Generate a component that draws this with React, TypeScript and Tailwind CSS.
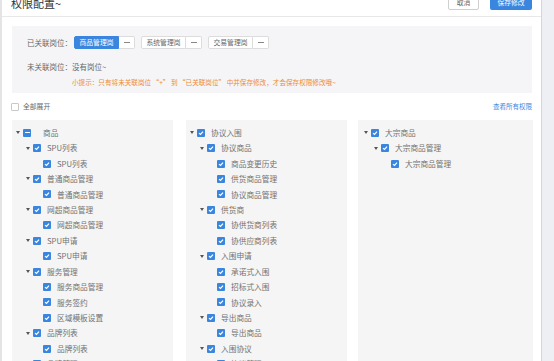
import React from "react";

type Node = { label: string; level: number; partial?: boolean };

const col1: Node[] = [
  { label: "商品", level: 0, partial: true },
  { label: "SPU列表", level: 1 },
  { label: "SPU列表", level: 2 },
  { label: "普通商品管理", level: 1 },
  { label: "普通商品管理", level: 2 },
  { label: "网超商品管理", level: 1 },
  { label: "网超商品管理", level: 2 },
  { label: "SPU申请", level: 1 },
  { label: "SPU申请", level: 2 },
  { label: "服务管理", level: 1 },
  { label: "服务商品管理", level: 2 },
  { label: "服务签约", level: 2 },
  { label: "区域模板设置", level: 2 },
  { label: "品牌列表", level: 1 },
  { label: "品牌列表", level: 2 },
  { label: "品牌管理", level: 1 },
];

const col2: Node[] = [
  { label: "协议入围", level: 0 },
  { label: "协议商品", level: 1 },
  { label: "商品变更历史", level: 2 },
  { label: "供货商品管理", level: 2 },
  { label: "协议商品管理", level: 2 },
  { label: "供货商", level: 1 },
  { label: "协供货商列表", level: 2 },
  { label: "协供应商列表", level: 2 },
  { label: "入围申请", level: 1 },
  { label: "承诺式入围", level: 2 },
  { label: "招标式入围", level: 2 },
  { label: "协议录入", level: 2 },
  { label: "导出商品", level: 1 },
  { label: "导出商品", level: 2 },
  { label: "入围协议", level: 1 },
  { label: "协议管理", level: 2 },
];

const col3: Node[] = [
  { label: "大宗商品", level: 0 },
  { label: "大宗商品管理", level: 1 },
  { label: "大宗商品管理", level: 2 },
];

const Check = ({ partial }: { partial?: boolean }) => (
  <span className="w-[8px] h-[8px] rounded-[1px] bg-[#3a86df] flex items-center justify-center shrink-0">
    {partial ? (
      <span className="w-[5px] h-[1.5px] bg-white" />
    ) : (
      <svg width="6" height="6" viewBox="0 0 6 6">
        <path d="M1 3.1 L2.5 4.5 L5 1.6" stroke="#fff" strokeWidth="1.2" fill="none" />
      </svg>
    )}
  </span>
);

const TreeRow = ({ node }: { node: Node }) => {
  const pad = ["pl-[3px]", "pl-[13px]", "pl-[23px]"][node.level];
  return (
    <div className={`h-[15.43px] flex items-center ${pad}`}>
      <span className="w-[6px] h-full flex items-center justify-center shrink-0">
        {node.level < 2 && (
          <span className="w-0 h-0 border-l-[2px] border-r-[2px] border-t-[3px] border-l-transparent border-r-transparent border-t-[#555]" />
        )}
      </span>
      <span className="ml-[2px]">
        <Check partial={node.partial} />
      </span>
      <span className={`${node.partial ? "ml-[12px]" : "ml-[6px]"} text-[7.7px] leading-none text-[#727272] whitespace-nowrap`}>
        {node.label}
      </span>
    </div>
  );
};

const TreeCol = ({ nodes, w }: { nodes: Node[]; w: string }) => (
  <div className={`${w} bg-[#f5f5f5] pt-[5px] h-[260px] shrink-0`}>
    {nodes.map((n, i) => (
      <TreeRow key={i} node={n} />
    ))}
  </div>
);

const PostTag = ({ name, active }: { name: string; active?: boolean }) => (
  <div className="flex h-[13px]">
    <span
      className={`w-[45px] flex items-center justify-center text-[6.8px] rounded-l-[2px] border ${
        active ? "bg-[#3a86df] border-[#3a86df] text-white" : "bg-white border-[#dcdcdc] text-[#666]"
      }`}
    >
      {name}
    </span>
    <span className="w-[16px] flex items-center justify-center bg-white border border-l-0 border-[#dcdcdc] rounded-r-[2px]">
      <span className="w-[6px] h-[1px] bg-[#888]" />
    </span>
  </div>
);

export default function App() {
  return (
    <div
      className="w-[554px] h-[361px] overflow-hidden flex bg-[#eeeef5]"
      style={{ fontFamily: '"Noto Sans CJK SC", "Noto Sans", sans-serif' }}
    >
      <div className="w-[2px] bg-[#e4e4e4] shrink-0" />
      <div className="w-[540px] bg-white border-r border-[#d6d6d6] shrink-0 pl-[10px] pr-[9px]">
        <div className="-mt-[9px] h-[26px] border-b border-[#e8e8e8] -ml-[10px] -mr-[9px] pl-[9px] pr-[9px] flex items-start justify-between">
          <span className="pt-[4px] text-[11px] leading-[16px] text-[#333]">权限配置~</span>
          <div className="flex gap-[11px] mt-[3px]">
            <span className="w-[31px] h-[16px] border border-[#cfcfcf] rounded-[2px] bg-white text-[6.8px] text-[#666] flex items-center justify-center">
              取消
            </span>
            <span className="w-[42px] h-[16px] rounded-[2px] bg-[#3a86df] text-[6.8px] text-white flex items-center justify-center">
              保存修改
            </span>
          </div>
        </div>

        <div className="mt-[9px] bg-[#f5f5f7] h-[67px] pl-[15px] pt-[10px]">
          <div className="flex items-center h-[13px]">
            <span className="text-[7.5px] text-[#666] w-[47px]">已关联岗位：</span>
            <div className="flex gap-[6px]">
              <PostTag name="商品管理岗" active />
              <PostTag name="系统管理岗" />
              <PostTag name="交易管理岗" />
            </div>
          </div>
          <div className="mt-[13px] text-[7.5px] leading-[10px] text-[#666]">未关联岗位：没有岗位~</div>
          <div className="mt-[5px] ml-[45px] text-[6.6px] leading-[10px] text-[#f08a34] whitespace-nowrap">
            小提示：只有将未关联岗位 “+” 到 “已关联岗位” 中并保存修改，才会保存权限修改哦~
          </div>
        </div>

        <div className="h-[27px] flex items-center justify-between">
          <label className="flex items-center gap-[4px] -ml-[1px]">
            <span className="w-[8px] h-[8px] border border-[#c8c8c8] bg-white rounded-[1px]" />
            <span className="text-[6.8px] text-[#666]">全部展开</span>
          </label>
          <span className="text-[6.5px] text-[#3a86df]">查看所有权限</span>
        </div>

        <div className="flex">
          <TreeCol nodes={col1} w="w-[161px]" />
          <div className="w-[13px] shrink-0" />
          <TreeCol nodes={col2} w="w-[161px]" />
          <div className="w-[11px] shrink-0" />
          <div className="w-[175px] bg-[#f5f5f5] pt-[5px] pl-[2px] h-[260px] shrink-0">
            {col3.map((n, i) => (
              <TreeRow key={i} node={n} />
            ))}
          </div>
        </div>
      </div>
    </div>
  );
}
